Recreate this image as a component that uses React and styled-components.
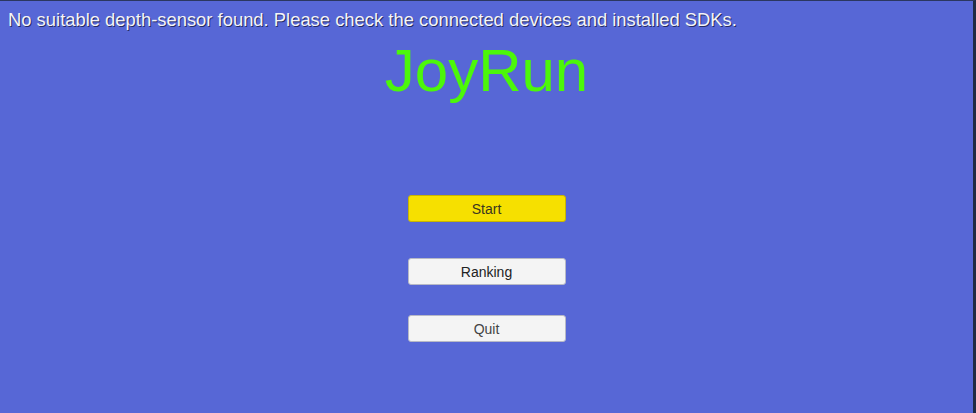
import React from 'react';
import styled, { createGlobalStyle } from 'styled-components';

const GlobalStyle = createGlobalStyle`
  html, body {
    margin: 0;
    padding: 0;
    background: #1f2b44;
  }
  body {
    font-family: "Liberation Sans", Arial, sans-serif;
  }
`;

const Screen = styled.div`
  box-sizing: border-box;
  width: 976px;
  height: 413px;
  background: #5767d6;
  border-top: 1px solid #2b3760;
  border-right: 3px solid #1f2b44;
  display: flex;
  flex-direction: column;
  align-items: center;
  overflow: hidden;
`;

const Message = styled.div`
  align-self: stretch;
  padding: 8px 0 0 8px;
  font-size: 18.4px;
  line-height: 22px;
  color: #f4f4f8;
  text-shadow: 1px 1px 0 rgba(20, 24, 60, 0.75);
  white-space: nowrap;
`;

const Title = styled.h1`
  margin: 6px 0 0;
  font-weight: 400;
  font-size: 60px;
  line-height: 68px;
  color: #4cf70a;
`;

const Menu = styled.div`
  display: flex;
  flex-direction: column;
  margin-top: 90px;
`;

const MenuButton = styled.button`
  box-sizing: border-box;
  width: 158px;
  height: 27px;
  margin-top: ${(props) => props.gap || 0}px;
  padding: 0;
  border: 1px solid ${(props) => (props.primary ? '#c8b400' : '#b7b9c6')};
  border-radius: 3px;
  background: ${(props) => (props.primary ? '#f6e000' : '#f4f4f4')};
  color: ${(props) => props.tone || '#333333'};
  font-family: "Liberation Sans", Arial, sans-serif;
  font-size: 14px;
  cursor: pointer;
`;

const App = () => (
  <>
    <GlobalStyle />
    <Screen>
      <Message>
        No suitable depth-sensor found. Please check the connected devices and installed SDKs.
      </Message>
      <Title>JoyRun</Title>
      <Menu>
        <MenuButton primary tone="#3a3620">Start</MenuButton>
        <MenuButton gap={36} tone="#222222">Ranking</MenuButton>
        <MenuButton gap={30} tone="#444444">Quit</MenuButton>
      </Menu>
    </Screen>
  </>
);

export default App;
